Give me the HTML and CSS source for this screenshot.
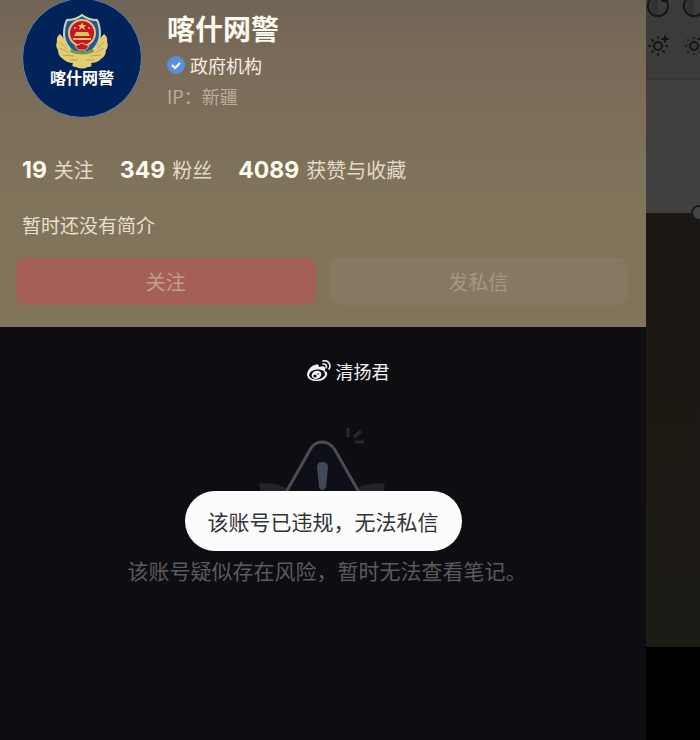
FILE: index.html
```html
<!DOCTYPE html>
<html lang="zh-CN">
<head>
    <meta charset="UTF-8">
    <meta name="viewport" content="width=device-width, initial-scale=1.0">
    <title>喀什网警</title>
    <link rel="stylesheet" href="styles.css">
</head>
<body>
    <main class="phone">
        <section class="profile">
            <div class="account">
                <div class="avatar">
                    <!-- Police badge -->
                    <svg class="badge" viewBox="0 0 52 56" aria-hidden="true">
                        <path d="M26 2 Q32 7 41 7 Q44 12 44 22 Q43 36 26 44 Q9 36 8 22 Q8 12 11 7 Q20 7 26 2Z" fill="#25578f" stroke="#cfd3b8" stroke-width="2"/>
                        <path d="M4 21 Q0 24 1 29 Q-1 33 2 37 Q2 43 7 46 Q11 50 17 50 Q15 54 20 54 Q26 57 32 54 Q37 54 35 50 Q41 50 45 46 Q50 43 50 37 Q53 33 51 29 Q52 24 48 21 Q42 27 42 32 Q37 38 26 39 Q15 38 10 32 Q10 27 4 21Z" fill="#e2cd74"/>
                        <path d="M4 29 L11 36 M4 35 L13 40 M7 42 L18 43 M48 29 L41 36 M48 35 L39 40 M45 42 L34 43 M14 47 L22 47 M38 47 L30 47" stroke="#b8a24c" fill="none"/>
                        <path d="M15 36 Q26 41 37 36 L38 39 Q26 44 14 39Z" fill="#6f9950"/>
                        <circle cx="26" cy="20" r="13" fill="#c31526" stroke="#dec37d" stroke-width="2"/>
                        <path d="M26 9 L27 12 L30 12 L28 14 L29 17 L26 15 L23 17 L24 14 L22 12 L25 12Z" fill="#f0c75d"/>
                        <path d="M18 23 H34 L32 19 H20Z M17 25 H35 V27 H17Z" fill="#e5bd63"/>
                        <circle cx="19" cy="15" r="1" fill="#f0c75d"/>
                        <circle cx="33" cy="15" r="1" fill="#f0c75d"/>
                        <path d="M19 33 L26 30 L33 33 L30 37 H22Z" fill="#c31526" stroke="#dec37d"/>
                    </svg>
                    <span class="avatar-name">喀什网警</span>
                </div>
                <div class="info">
                    <h1>喀什网警</h1>
                    <p class="verified">
                        <svg width="18" height="18" viewBox="0 0 18 18" aria-hidden="true">
                            <circle cx="9" cy="9" r="9" fill="#5b8fdc"/>
                            <path d="M5 9 L8 12 L13 7" fill="none" stroke="#fff" stroke-width="2"/>
                        </svg>
                        政府机构
                    </p>
                    <p class="location">IP：新疆</p>
                </div>
            </div>

            <ul class="stats">
                <li><strong>19</strong>关注</li>
                <li><strong>349</strong>粉丝</li>
                <li><strong>4089</strong>获赞与收藏</li>
            </ul>

            <p class="bio">暂时还没有简介</p>

            <div class="actions">
                <button class="follow" type="button">关注</button>
                <button class="message" type="button">发私信</button>
            </div>
        </section>

        <section class="notes">
            <div class="watermark">
                <svg width="24" height="22" viewBox="0 0 24 22" aria-hidden="true">
                    <path d="M8 5 Q12 3 12 7 Q18 5 18 8 L18 11 Q21 12 20 15 Q18 21 10 21 Q1 21 0 15 Q0 11 4 7 Q6 5 8 5Z" fill="#f2f2f2"/>
                    <ellipse cx="10" cy="14.5" rx="8" ry="5" fill="#0e0d12" transform="rotate(-8 10 14)"/>
                    <ellipse cx="9.5" cy="15" rx="5" ry="4" fill="#f2f2f2" transform="rotate(-20 9 15)"/>
                    <circle cx="8" cy="16" r="1.6" fill="#0e0d12"/>
                    <circle cx="11" cy="14" r="0.8" fill="#0e0d12"/>
                    <path d="M16 1 Q20 0 22 3 Q24 6 22 9 M16 4 Q18 4 19 5 Q20 6 19 8" fill="none" stroke="#f2f2f2" stroke-width="1.6" stroke-linecap="round"/>
                </svg>
                清扬君
            </div>

            <!-- Warning sign, lower half sits behind the toast -->
            <svg class="warning" viewBox="0 0 130 110" aria-hidden="true">
                <path d="M1 57 Q18 54 34 64 L26 90 H8Z M127 57 Q110 54 94 64 L102 90 H120Z" fill="#242428"/>
                <path d="M14 90 L52 23 Q56 15 64 15 Q72 15 77 23 L115 90Z" fill="#0e0f19" stroke="#4b4b50" stroke-width="3" stroke-linejoin="round"/>
                <path d="M60 40 Q60 36 64 36 Q69 36 69 40 L67 60 Q64 64 62 60Z" fill="#424956" stroke="#424956" stroke-width="2"/>
                <path d="M90 1 V10 M96 10 L103 4 M97 15 H106" stroke="#29292d" stroke-width="3"/>
            </svg>

            <div class="toast" role="status">该账号已违规，无法私信</div>
            <p class="empty">该账号疑似存在风险，暂时无法查看笔记。</p>
        </section>
    </main>

    <aside class="editor">
        <div class="tools">
            <svg viewBox="0 0 24 24" aria-hidden="true">
                <path d="M12 3 A10 10 0 0 0 12 22Z" fill="#313131"/>
                <path d="M8 3 A10 10 0 1 0 21 8 M16 7 H21 V2" class="line"/>
            </svg>
            <svg viewBox="0 0 24 24" aria-hidden="true">
                <path d="M12 3 A10 10 0 0 0 12 22Z" fill="#313131"/>
                <path d="M8 3 A10 10 0 1 0 21 8" class="line"/>
            </svg>
            <svg viewBox="0 0 24 24" aria-hidden="true">
                <circle cx="12" cy="12" r="4" class="line"/>
                <path d="M12 3 V4 M12 20 V21 M3 12 H4 M20 12 H21 M6 6 L7 7 M6 18 L7 17 M17 17 L18 18 M16 5 H22 M19 2 V8" class="line"/>
            </svg>
            <svg viewBox="0 0 24 24" aria-hidden="true">
                <circle cx="12" cy="12" r="4" class="line"/>
                <path d="M12 4 V4 M12 20 V20 M4 12 H4 M20 12 H20 M6 6 V6 M6 18 V18 M18 18 V18 M16 5 H22" class="line"/>
            </svg>
        </div>
        <div class="canvas"></div>
        <div class="preview"><span class="handle"></span></div>
    </aside>
</body>
</html>
```
FILE: styles.css
```css
* {
    box-sizing: border-box;
}
body {
    display: flex;
    min-height: 100vh;
    margin: 0;
    overflow-x: hidden;
    background: #000;
    color: #f3eee2;
    font-family: "Noto Sans CJK SC", sans-serif;
}
h1, p, ul {
    margin: 0;
    padding: 0;
}
.phone {
    display: flex;
    flex-direction: column;
    flex: 1;
    min-width: 0;
    background: #0e0d12;
}

/* Profile header */
.profile {
    padding: 0 18px 21px 16px;
    overflow: hidden;
    background: linear-gradient(#706457 0, #7a6b59 60px, #7d6f59 130px, #80745b 200px, #80745b 100%);
    border-bottom: 1px solid #83766b;
}
.account {
    display: flex;
    gap: 25px;
    margin-top: -2px;
    padding-left: 6px;
}
.avatar {
    display: flex;
    flex-direction: column;
    align-items: center;
    width: 120px;
    height: 120px;
    padding-top: 14px;
    border: 1px solid #6782a0;
    border-radius: 50%;
    background: #02225a;
}
.badge {
    width: 52px;
    height: 56px;
}
.avatar-name {
    color: #fff;
    font-size: 16px;
    font-weight: bold;
    line-height: 16px;
}
.info {
    padding-top: 10px;
}
h1 {
    color: #fffaf0;
    font-size: 28px;
    line-height: 40px;
}
.verified {
    display: flex;
    align-items: center;
    gap: 5px;
    font-size: 18px;
    line-height: 34px;
}
.location {
    color: #b8ad9e;
    font-size: 18px;
    line-height: 28px;
}
.stats {
    display: flex;
    gap: 26px;
    margin-top: 36px;
    padding-left: 6px;
    list-style: none;
}
.stats li {
    display: flex;
    align-items: center;
    gap: 7px;
    color: #e2d9c8;
    font-size: 20px;
    line-height: 32px;
}
.stats strong {
    color: #fffaf0;
    font-family: Inter, "Noto Sans CJK SC", sans-serif;
    font-size: 23px;
}
.bio {
    margin-top: 24px;
    padding-left: 6px;
    color: #e8dfcf;
    font-size: 19px;
    line-height: 30px;
}
.actions {
    display: flex;
    gap: 13px;
    margin-top: 18px;
}
.actions button {
    flex: 1;
    height: 47px;
    border: none;
    border-radius: 9px;
    font-family: inherit;
    font-size: 20px;
    cursor: pointer;
}
.actions .follow {
    background: #a65e59;
    color: #bea183;
}
.actions .message {
    background: #857961;
    color: #a6997f;
}

/* Empty notes list */
.notes {
    display: flex;
    flex-direction: column;
    align-items: center;
    padding-top: 30px;
}
.watermark {
    display: flex;
    align-items: center;
    gap: 5px;
    padding-left: 50px;
    color: #f2f2f2;
    font-size: 18px;
    line-height: 28px;
}
.warning {
    width: 130px;
    height: 110px;
    margin-top: 42px;
}
.toast {
    z-index: 1;
    margin-top: -46px;
    padding: 0 23px;
    border-radius: 30px;
    background: #fcfcfd;
    color: #333336;
    font-size: 21px;
    line-height: 60px;
}
.empty {
    padding-left: 8px;
    color: #5b5a60;
    font-size: 21px;
    line-height: 38px;
}

/* Dimmed editor behind the phone */
.editor {
    display: flex;
    flex-direction: column;
    flex: 0 0 54px;
    overflow: hidden;
}
.tools {
    display: grid;
    grid-template-columns: 24px 24px;
    gap: 16px 12px;
    height: 86px;
    margin-top: -6px;
    align-content: start;
    background: #3b3b3b;
    border-bottom: 2px solid #353535;
}
.tools svg {
    width: 24px;
    height: 24px;
}
.line {
    fill: none;
    stroke: #151515;
    stroke-width: 2;
    stroke-linecap: round;
}
.canvas {
    height: 133px;
    background: #404040;
}
.preview {
    position: relative;
    height: 434px;
    background: linear-gradient(#1b1712, #1d1b15);
}
.handle {
    position: absolute;
    top: -8px;
    right: -7px;
    width: 16px;
    height: 16px;
    border: 2px solid #1b1b1b;
    border-radius: 50%;
    background: #454545;
}
```
